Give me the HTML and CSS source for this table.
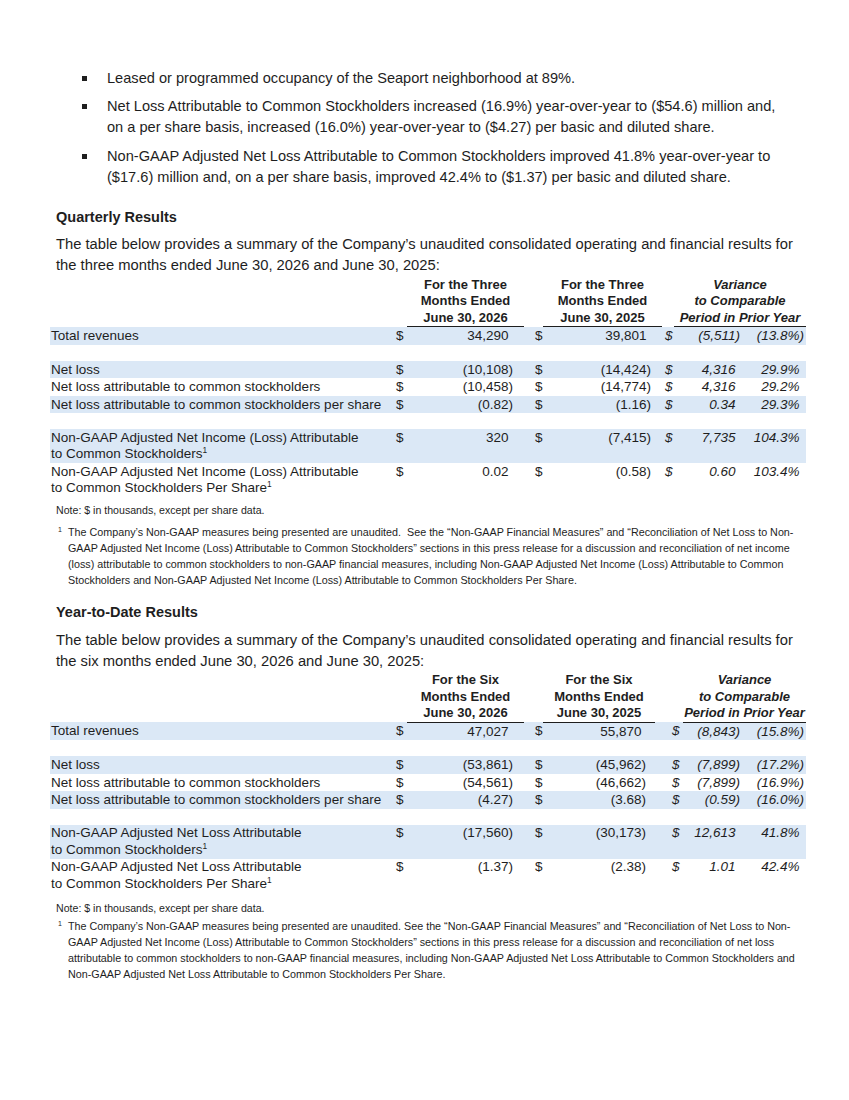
FILE: index.html
```html
<!DOCTYPE html>
<html lang="en">
<head>
<meta charset="utf-8">
<title>Quarterly Results</title>
<link rel="stylesheet" href="styles.css">
</head>
<body>
<div class="page">
  <ul class="bullets">
    <li><span class="ln">Leased or programmed occupancy of the Seaport neighborhood at 89%.</span></li>
    <li><span class="ln">Net Loss Attributable to Common Stockholders increased (16.9%) year-over-year to ($54.6) million and,</span><span class="ln">on a per share basis, increased (16.0%) year-over-year to ($4.27) per basic and diluted share.</span></li>
    <li><span class="ln">Non-GAAP Adjusted Net Loss Attributable to Common Stockholders improved 41.8% year-over-year to</span><span class="ln">($17.6) million and, on a per share basis, improved 42.4% to ($1.37) per basic and diluted share.</span></li>
  </ul>

  <section class="sect sect-q">
    <h2 class="heading">Quarterly Results</h2>
    <p class="intro"><span class="ln">The table below provides a summary of the Company’s unaudited consolidated operating and financial results for</span><span class="ln">the three months ended June 30, 2026 and June 30, 2025:</span></p>
    <table class="fin fin-q">
      <colgroup>
        <col class="c-label"><col class="c-d1"><col class="c-v1"><col class="c-d2"><col class="c-v2"><col class="c-d3"><col class="c-var"><col class="c-pct">
      </colgroup>
      <thead>
        <tr>
          <th></th><th></th>
          <th class="hd">For the Three<br>Months Ended<br>June 30, 2026</th>
          <th></th>
          <th class="hd">For the Three<br>Months Ended<br>June 30, 2025</th>
          <th></th>
          <th class="hd it" colspan="2">Variance<br>to Comparable<br>Period in Prior Year</th>
        </tr>
      </thead>
      <tbody>
        <tr class="shade"><td class="lbl">Total revenues</td><td class="d">$</td><td class="v1"><span class="p">34,290</span></td><td class="d d2">$</td><td class="v2"><span class="p">39,801</span></td><td class="d d3 it">$</td><td class="var it">(5,511)</td><td class="pct it">(13.8%)</td></tr>
        <tr class="gap"><td colspan="8"></td></tr>
        <tr class="shade"><td class="lbl">Net loss</td><td class="d">$</td><td class="v1">(10,108)</td><td class="d d2">$</td><td class="v2">(14,424)</td><td class="d d3 it">$</td><td class="var it"><span class="p">4,316</span></td><td class="pct it"><span class="p">29.9%</span></td></tr>
        <tr><td class="lbl">Net loss attributable to common stockholders</td><td class="d">$</td><td class="v1">(10,458)</td><td class="d d2">$</td><td class="v2">(14,774)</td><td class="d d3 it">$</td><td class="var it"><span class="p">4,316</span></td><td class="pct it"><span class="p">29.2%</span></td></tr>
        <tr class="shade"><td class="lbl">Net loss attributable to common stockholders per share</td><td class="d">$</td><td class="v1">(0.82)</td><td class="d d2">$</td><td class="v2">(1.16)</td><td class="d d3 it">$</td><td class="var it"><span class="p">0.34</span></td><td class="pct it"><span class="p">29.3%</span></td></tr>
        <tr class="gap"><td colspan="8"></td></tr>
        <tr class="shade two"><td class="lbl">Non-GAAP Adjusted Net Income (Loss) Attributable<br>to Common Stockholders<sup>1</sup></td><td class="d">$</td><td class="v1"><span class="p">320</span></td><td class="d d2">$</td><td class="v2">(7,415)</td><td class="d d3 it">$</td><td class="var it"><span class="p">7,735</span></td><td class="pct it"><span class="p">104.3%</span></td></tr>
        <tr class="two"><td class="lbl">Non-GAAP Adjusted Net Income (Loss) Attributable<br>to Common Stockholders Per Share<sup>1</sup></td><td class="d">$</td><td class="v1"><span class="p">0.02</span></td><td class="d d2">$</td><td class="v2">(0.58)</td><td class="d d3 it">$</td><td class="var it"><span class="p">0.60</span></td><td class="pct it"><span class="p">103.4%</span></td></tr>
      </tbody>
    </table>
    <p class="note">Note: $ in thousands, except per share data.</p>
    <div class="foot">
      <sup class="fmark">1</sup>
      <p class="ftext"><span class="ln">The Company’s Non-GAAP measures being presented are unaudited.&nbsp; See the “Non-GAAP Financial Measures” and “Reconciliation of Net Loss to Non-</span><span class="ln">GAAP Adjusted Net Income (Loss) Attributable to Common Stockholders” sections in this press release for a discussion and reconciliation of net income</span><span class="ln">(loss) attributable to common stockholders to non-GAAP financial measures, including Non-GAAP Adjusted Net Income (Loss) Attributable to Common</span><span class="ln">Stockholders and Non-GAAP Adjusted Net Income (Loss) Attributable to Common Stockholders Per Share.</span></p>
    </div>
  </section>

  <section class="sect sect-y">
    <h2 class="heading">Year-to-Date Results</h2>
    <p class="intro"><span class="ln">The table below provides a summary of the Company’s unaudited consolidated operating and financial results for</span><span class="ln">the six months ended June 30, 2026 and June 30, 2025:</span></p>
    <table class="fin fin-y">
      <colgroup>
        <col class="c-label"><col class="c-d1"><col class="c-v1"><col class="c-d2"><col class="c-v2"><col class="c-d3"><col class="c-var"><col class="c-pct">
      </colgroup>
      <thead>
        <tr>
          <th></th><th></th>
          <th class="hd">For the Six<br>Months Ended<br>June 30, 2026</th>
          <th></th>
          <th class="hd">For the Six<br>Months Ended<br>June 30, 2025</th>
          <th></th>
          <th class="hd it" colspan="2">Variance<br>to Comparable<br>Period in Prior Year</th>
        </tr>
      </thead>
      <tbody>
        <tr class="shade"><td class="lbl">Total revenues</td><td class="d">$</td><td class="v1"><span class="p">47,027</span></td><td class="d d2">$</td><td class="v2"><span class="p">55,870</span></td><td class="d d3 it">$</td><td class="var it">(8,843)</td><td class="pct it">(15.8%)</td></tr>
        <tr class="gap"><td colspan="8"></td></tr>
        <tr class="shade"><td class="lbl">Net loss</td><td class="d">$</td><td class="v1">(53,861)</td><td class="d d2">$</td><td class="v2">(45,962)</td><td class="d d3 it">$</td><td class="var it">(7,899)</td><td class="pct it">(17.2%)</td></tr>
        <tr><td class="lbl">Net loss attributable to common stockholders</td><td class="d">$</td><td class="v1">(54,561)</td><td class="d d2">$</td><td class="v2">(46,662)</td><td class="d d3 it">$</td><td class="var it">(7,899)</td><td class="pct it">(16.9%)</td></tr>
        <tr class="shade"><td class="lbl">Net loss attributable to common stockholders per share</td><td class="d">$</td><td class="v1">(4.27)</td><td class="d d2">$</td><td class="v2">(3.68)</td><td class="d d3 it">$</td><td class="var it">(0.59)</td><td class="pct it">(16.0%)</td></tr>
        <tr class="gap"><td colspan="8"></td></tr>
        <tr class="shade two"><td class="lbl">Non-GAAP Adjusted Net Loss Attributable<br>to Common Stockholders<sup>1</sup></td><td class="d">$</td><td class="v1">(17,560)</td><td class="d d2">$</td><td class="v2">(30,173)</td><td class="d d3 it">$</td><td class="var it"><span class="p">12,613</span></td><td class="pct it"><span class="p">41.8%</span></td></tr>
        <tr class="two"><td class="lbl">Non-GAAP Adjusted Net Loss Attributable<br>to Common Stockholders Per Share<sup>1</sup></td><td class="d">$</td><td class="v1">(1.37)</td><td class="d d2">$</td><td class="v2">(2.38)</td><td class="d d3 it">$</td><td class="var it"><span class="p">1.01</span></td><td class="pct it"><span class="p">42.4%</span></td></tr>
      </tbody>
    </table>
    <p class="note">Note: $ in thousands, except per share data.</p>
    <div class="foot">
      <sup class="fmark">1</sup>
      <p class="ftext"><span class="ln">The Company’s Non-GAAP measures being presented are unaudited. See the “Non-GAAP Financial Measures” and “Reconciliation of Net Loss to Non-</span><span class="ln">GAAP Adjusted Net Income (Loss) Attributable to Common Stockholders” sections in this press release for a discussion and reconciliation of net loss</span><span class="ln">attributable to common stockholders to non-GAAP financial measures, including Non-GAAP Adjusted Net Loss Attributable to Common Stockholders and</span><span class="ln">Non-GAAP Adjusted Net Loss Attributable to Common Stockholders Per Share.</span></p>
    </div>
  </section>
</div>
</body>
</html>
```

FILE: styles.css
```css
* { box-sizing: border-box; }

html, body {
  margin: 0;
  padding: 0;
  background: #ffffff;
}

body {
  font-family: "Liberation Sans", Arial, sans-serif;
  color: #1e1e1e;
  width: 849px;
  height: 1100px;
  overflow: hidden;
}

.page {
  padding: 67.5px 40px 0 56px;
}

.ln {
  display: block;
  white-space: nowrap;
}

/* Bullets */
.bullets {
  list-style: none;
  margin: 0;
  padding: 0 0 0 51px;
  font-size: 14.6px;
  line-height: 21px;
}

.bullets li {
  position: relative;
  margin-bottom: 7.5px;
}

.bullets li:last-child { margin-bottom: 0; }

.bullets li::before {
  content: "";
  position: absolute;
  left: -25px;
  top: 8px;
  width: 5px;
  height: 5px;
  background: #1e1e1e;
}

/* Sections */
.sect-q { margin-top: 19px; }
.sect-y { margin-top: 14px; }

.heading {
  margin: 0;
  font-size: 14.5px;
  font-weight: bold;
  line-height: 21px;
}

.intro {
  margin: 6px 0 0 0;
  font-size: 14.75px;
  line-height: 21px;
}

.sect-y .intro { margin-top: 7.5px; }

/* Tables */
.fin {
  margin: 1px 0 0 -6px;
  width: 756px;
  border-collapse: collapse;
  table-layout: fixed;
  font-size: 13.5px;
}

.sect-y .fin { margin-top: 0; }

.c-label { width: 345px; }
.c-d1 { width: 12px; }
.c-v1 { width: 117px; }
.c-d2 { width: 19px; }
.c-v2 { width: 119px; }
.c-d3 { width: 12px; }
.c-var { width: 71px; }
.c-pct { width: 61px; }

.fin-y .c-v2 { width: 112px; }
.fin-y .c-d3 { width: 28px; }
.fin-y .c-var { width: 62px; }

.fin th {
  padding: 0;
  font-size: 13px;
  font-weight: bold;
  line-height: 16.5px;
  vertical-align: bottom;
}

.fin th.hd {
  text-align: center;
  border-bottom: 1px solid #1e1e1e;
}

.fin td {
  padding: 0;
  height: 17.5px;
  line-height: 17.5px;
  vertical-align: top;
  white-space: nowrap;
}

.fin tr.gap td { height: 16px; }

.fin tr.two td {
  height: 34px;
  line-height: 16.5px;
  padding-top: 0.5px;
}

.fin tr.shade td { background: #dbe8f6; }

.it { font-style: italic; }

.lbl { padding-left: 1px !important; }

.d { text-align: left; }
.fin td.d { padding-left: 1px; }
.fin td.d2 { padding-left: 11px; }
.fin td.d3 { padding-left: 3px; }
.fin-y td.d3 { padding-left: 17px; }

.v1, .v2, .var, .pct { text-align: right; }
.fin td.v1 { padding-right: 11px; }
.fin td.v2 { padding-right: 11px; }
.fin-y td.v2 { padding-right: 9px; }
.fin td.var { padding-right: 5px; }
.fin td.pct { padding-right: 2px; }

.p::after {
  content: ")";
  visibility: hidden;
}

sup {
  font-size: 0.62em;
  line-height: 0;
  vertical-align: 0.55em;
}

/* Notes */
.note {
  margin: 6px 0 0 0;
  font-size: 10.6px;
  line-height: 15px;
}

.sect-y .note { margin-top: 8px; }

.foot {
  display: flex;
  align-items: flex-start;
  margin-top: 5.5px;
}

.sect-y .foot { margin-top: 2.5px; }

.fmark {
  display: block;
  width: 12px;
  padding-left: 2px;
  font-size: 7px;
  line-height: 12px;
  vertical-align: baseline;
}

.ftext {
  margin: 0;
  font-size: 10.75px;
  line-height: 16px;
}
```
